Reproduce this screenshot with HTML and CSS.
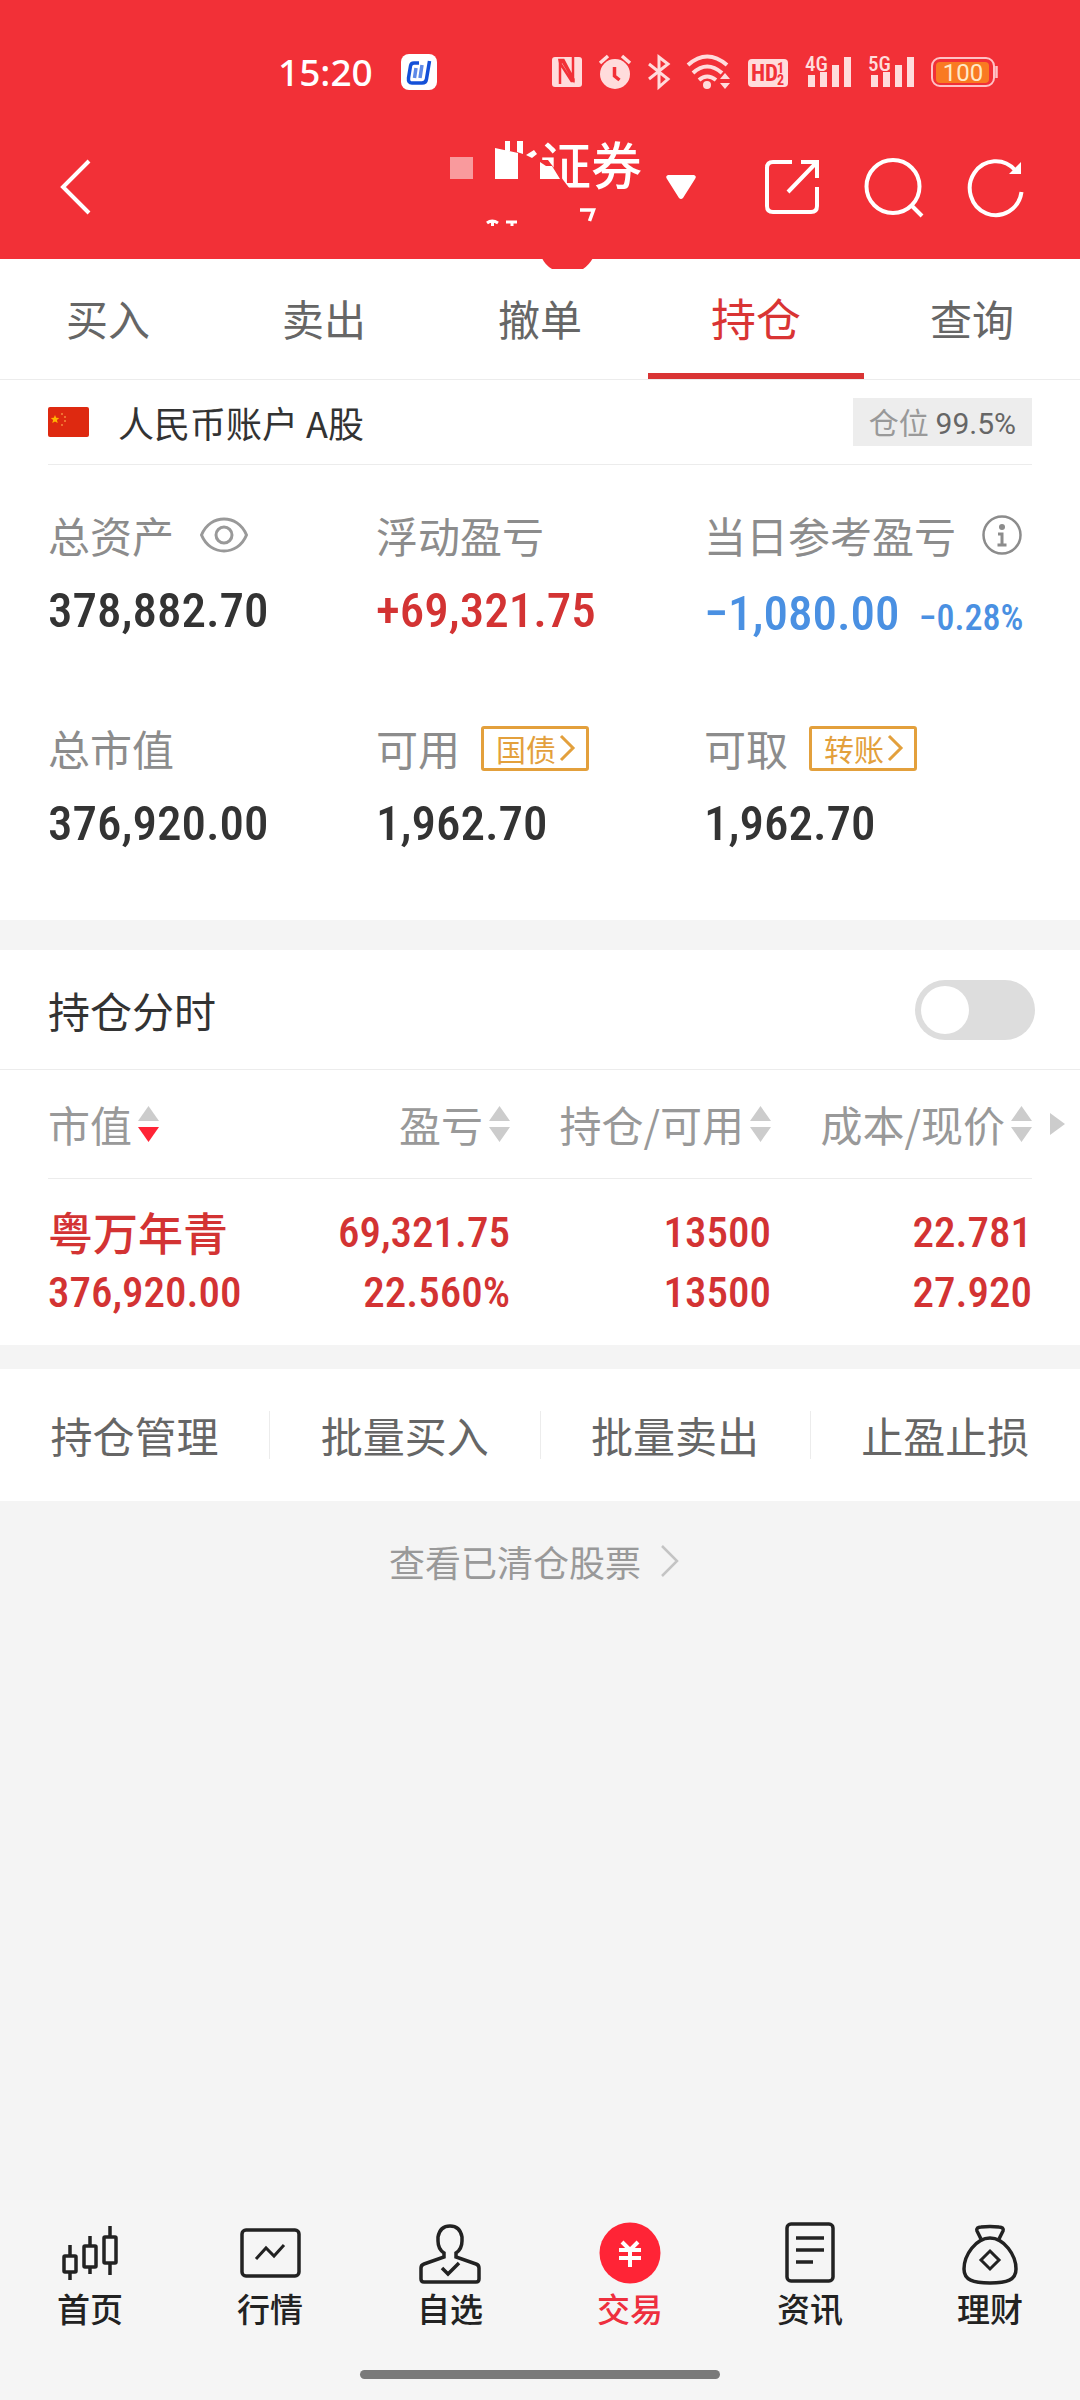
FILE: index.html
```html
<!DOCTYPE html>
<html lang="zh-CN">
<head>
<meta charset="utf-8">
<meta name="viewport" content="width=device-width, initial-scale=1">
<title>证券交易 - 持仓</title>
<link rel="stylesheet" href="styles.css">
</head>
<body>
<header class="header">
  <div class="status">
    <div class="status-left">
      <time class="clock">15:20</time>
      <svg class="app-badge" width="36" height="36" viewBox="0 0 36 36" aria-hidden="true">
        <rect width="36" height="36" rx="8" fill="#fff"/>
        <path d="M18 9h-5q-3 0-3.500 3l-2 12q-.5 5 3.500 5h10q4 0 4.500-4l3-18" fill="none" stroke="#1450d8" stroke-width="3.500"/>
        <path d="M15 14l-1.500 10M21 11l-2 13" stroke="#5f8ae8" stroke-width="3.500"/>
      </svg>
    </div>
    <div class="status-right">
      <svg width="30" height="36" viewBox="0 0 30 36" aria-hidden="true">
        <rect y="3" width="30" height="30" rx="3" fill="#ffdcdc"/>
        <path d="M8 30V8h3l10 17V3M7.500 6h4l10 19v2h-2L8 9z" fill="none" stroke="#f23037" stroke-width="2.500"/>
      </svg>
      <svg width="32" height="36" viewBox="0 0 32 36" aria-hidden="true">
        <circle cx="16" cy="20" r="15" fill="#ffdcdc"/>
        <path d="M1 9l8-7M31 9l-8-7" stroke="#ffdcdc" stroke-width="3.500"/>
        <path d="M15.500 13v9l5 4" fill="none" stroke="#f23037" stroke-width="3.500"/>
      </svg>
      <svg width="22" height="36" viewBox="0 0 22 36" aria-hidden="true">
        <path d="M1 10l19 15-9 8V3l9 7L1 25" fill="none" stroke="#ffdcdc" stroke-width="3"/>
      </svg>
      <svg width="44" height="36" viewBox="0 0 44 36" aria-hidden="true">
        <g fill="none" stroke="#ffdcdc" stroke-width="4"><path d="M1 11q19-17 39 0"/><path d="M6 19q14-13 29 0"/><path d="M12 26q8-7 17 0"/></g>
        <circle cx="20" cy="31" r="4" fill="#ffdcdc"/>
        <path d="M33 25l5-6 5 6zM33 29l5 6 5-6z" fill="#ffdcdc"/>
      </svg>
      <svg width="40" height="36" viewBox="0 0 40 36" aria-hidden="true">
        <rect y="5" width="40" height="28" rx="4" fill="#ffdcdc"/>
        <text class="glyph-bold" x="3" y="27" font-size="23">HD</text>
        <text class="glyph-bold" x="29" y="19" font-size="14">1</text>
        <text class="glyph-bold" x="29" y="31" font-size="14">2</text>
      </svg>
      <svg width="46" height="36" viewBox="0 0 46 36" aria-hidden="true">
        <text class="glyph-net" x="0" y="17" font-size="21">4G</text>
        <path d="M3 21h7v12H3zM15 18h7v15h-7zM27 11h7v22h-7zM39 3h7v30h-7z" fill="#ffdcdc"/>
      </svg>
      <svg width="46" height="36" viewBox="0 0 46 36" aria-hidden="true">
        <text class="glyph-net" x="0" y="17" font-size="21">5G</text>
        <path d="M3 21h7v12H3zM15 18h7v15h-7zM27 11h7v22h-7zM39 3h7v30h-7z" fill="#ffdcdc"/>
      </svg>
      <svg width="67" height="36" viewBox="0 0 67 36" aria-hidden="true">
        <rect x="1" y="4" width="62" height="28" rx="8" fill="none" stroke="#ffc2c6" stroke-width="2"/>
        <rect x="5" y="8" width="53" height="21" rx="4" fill="#f97a22"/>
        <path d="M65.500 12v12" stroke="#ffc2c6" stroke-width="2.500"/>
        <text class="glyph-batt" x="32" y="27" font-size="24" text-anchor="middle">100</text>
      </svg>
    </div>
  </div>
  <div class="appbar">
    <button class="icon-btn" aria-label="返回">
      <svg width="30" height="54" viewBox="0 0 30 54"><path d="M29 1L3 27l26 26" fill="none" stroke="#fff" stroke-width="4"/></svg>
    </button>
    <div class="account">
      <div class="account-name">
        <h1>证券</h1>
        <svg class="mask" width="192" height="160" viewBox="450 115 192 160" aria-hidden="true">
          <path d="M450 157h23v22h-23z" fill="#f99a9d"/>
          <path d="M495 148l23 5v26h-23zM505 141h5v10h-5zM517 141h6v13l-6-2zM526 155l8-5 3 4-5 4z" fill="#fff"/>
          <path d="M536 160h12l22 29h-34z" fill="#f23037"/>
          <path d="M540 162l6 4h6l8 13h-20z" fill="#fff"/>
          <path d="M487 223q5-4 11 0M492.500 222v4M506 222h11M512 222v4" fill="none" stroke="#fff" stroke-width="3"/>
          <path d="M580 210h13.500l-4 11" fill="none" stroke="#fff" stroke-width="3.500"/>
          <path d="M542 258h51q-4 7-10 11h-31q-7-4-10-11z" fill="#f23037"/>
        </svg>
      </div>
      <button class="icon-btn" aria-label="切换账户">
        <svg width="30" height="24" viewBox="0 0 30 24"><path d="M2 0h26q3 1 1 4L17 23q-2 2-4 0L1 4q-2-3 1-4z" fill="#fff"/></svg>
      </button>
    </div>
    <div class="tools">
      <button class="icon-btn" aria-label="分享">
        <svg width="54" height="54" viewBox="0 0 54 54" fill="none" stroke="#fff" stroke-width="4"><path d="M27 2H8q-6 0-6 6v38q0 6 6 6h38q6 0 6-6V27M36 2h16v16M51 3L23 32"/></svg>
      </button>
      <button class="icon-btn" aria-label="搜索">
        <svg width="59" height="59" viewBox="0 0 59 59" fill="none" stroke="#fff" stroke-width="4"><circle cx="29" cy="28.500" r="26.500"/><path d="M47 47l11 11"/></svg>
      </button>
      <button class="icon-btn" aria-label="刷新">
        <svg width="56" height="58" viewBox="0 0 56 58" fill="none" stroke="#fff" stroke-width="4"><path d="M47 12A26 27 0 1 0 53.500 34"/><path d="M53 4v12H41z" fill="#fff" stroke="none"/></svg>
      </button>
    </div>
  </div>
</header>

<nav class="tabs">
  <a href="#buy">买入</a>
  <a href="#sell">卖出</a>
  <a href="#cancel">撤单</a>
  <a href="#positions" class="active" aria-current="page">持仓</a>
  <a href="#query">查询</a>
</nav>

<main>
  <section class="panel">
    <div class="account-row">
      <svg width="41" height="30" viewBox="0 0 41 30" aria-hidden="true">
        <rect width="41" height="30" rx="2" fill="#de2910"/>
        <path d="M7 8l1.200 2.800 3 .2-2.300 2 .8 3L7 14.400 4.300 16l.8-3-2.300-2 3-.2z" fill="#ffb400"/>
        <g fill="#f58a3c"><circle cx="14" cy="7" r="1"/><circle cx="17" cy="10" r="1"/><circle cx="17" cy="14" r="1"/><circle cx="14" cy="18" r="1"/></g>
      </svg>
      <h2>人民币账户 A股</h2>
      <p class="ratio">仓位 <span>99.5%</span></p>
    </div>
    <dl class="summary">
      <div>
        <dt>总资产
          <button class="icon-btn gap" aria-label="隐藏金额"><svg width="48" height="36" viewBox="0 0 48 36" fill="none" stroke="#999" stroke-width="3"><path d="M1.500 18C6 7 15 2 24 2s18 5 22.500 16C42 29 33 34 24 34S6 29 1.500 18z"/><circle cx="24" cy="18" r="8"/></svg></button>
        </dt>
        <dd>378,882.70</dd>
      </div>
      <div>
        <dt>浮动盈亏</dt>
        <dd class="up">+69,321.75</dd>
      </div>
      <div>
        <dt>当日参考盈亏
          <button class="icon-btn gap" aria-label="说明"><svg width="40" height="40" viewBox="0 0 40 40" fill="none" stroke="#8c8c8c" stroke-width="2.500"><circle cx="20" cy="20" r="18.500"/><circle cx="20" cy="12" r="3" fill="#8c8c8c" stroke="none"/><path d="M16 19h4v11M15.500 30h9" stroke-width="3"/></svg></button>
        </dt>
        <dd class="down">−1,080.00 <small>−0.28%</small></dd>
      </div>
      <div>
        <dt>总市值</dt>
        <dd>376,920.00</dd>
      </div>
      <div>
        <dt>可用 <a class="chip" href="#bond">国债<svg width="16" height="26" viewBox="0 0 16 26" aria-hidden="true"><path d="M1 1l12 12L1 25" fill="none" stroke="#e3a03c" stroke-width="3"/></svg></a></dt>
        <dd>1,962.70</dd>
      </div>
      <div>
        <dt>可取 <a class="chip" href="#transfer">转账<svg width="16" height="26" viewBox="0 0 16 26" aria-hidden="true"><path d="M1 1l12 12L1 25" fill="none" stroke="#e3a03c" stroke-width="3"/></svg></a></dt>
        <dd>1,962.70</dd>
      </div>
    </dl>
  </section>

  <section class="panel holdings">
    <div class="toggle-row">
      <label for="intraday">持仓分时</label>
      <input class="switch" type="checkbox" role="switch" id="intraday">
    </div>
    <div class="table-wrap">
      <table>
        <thead>
          <tr>
            <th class="first"><button class="sort">市值<svg width="21" height="36" viewBox="0 0 21 36" aria-hidden="true"><path d="M0 15L10.500 0 21 15z" fill="#ccc"/><path d="M0 21h21L10.500 36z" fill="#ff2436"/></svg></button></th>
            <th><button class="sort">盈亏<svg width="21" height="36" viewBox="0 0 21 36" aria-hidden="true"><path d="M0 15L10.500 0 21 15zM0 21h21L10.500 36z" fill="#ccc"/></svg></button></th>
            <th><button class="sort">持仓/可用<svg width="21" height="36" viewBox="0 0 21 36" aria-hidden="true"><path d="M0 15L10.500 0 21 15zM0 21h21L10.500 36z" fill="#ccc"/></svg></button></th>
            <th><button class="sort">成本/现价<svg width="21" height="36" viewBox="0 0 21 36" aria-hidden="true"><path d="M0 15L10.500 0 21 15zM0 21h21L10.500 36z" fill="#ccc"/></svg></button></th>
          </tr>
        </thead>
        <tbody>
          <tr>
            <td class="first"><span class="stock">粤万年青</span><span>376,920.00</span></td>
            <td><span>69,321.75</span><span>22.560%</span></td>
            <td><span>13500</span><span>13500</span></td>
            <td><span>22.781</span><span>27.920</span></td>
          </tr>
        </tbody>
      </table>
      <svg class="more-cols" width="15" height="22" viewBox="0 0 15 22" aria-hidden="true"><path d="M0 0l15 11L0 22z" fill="#ccc"/></svg>
    </div>
  </section>

  <nav class="panel actions">
    <a href="#manage">持仓管理</a>
    <a href="#batch-buy">批量买入</a>
    <a href="#batch-sell">批量卖出</a>
    <a href="#stop">止盈止损</a>
  </nav>

  <a class="cleared" href="#cleared">查看已清仓股票
    <svg width="18" height="32" viewBox="0 0 18 32" aria-hidden="true"><path d="M1 1l15 15L1 31" fill="none" stroke="#c4c4c4" stroke-width="2.500"/></svg>
  </a>
</main>

<footer class="bottom">
  <nav class="bottom-nav">
    <a href="#home">
      <svg width="66" height="66" viewBox="0 0 66 66" fill="none" stroke="#222" stroke-width="3.500"><rect x="7" y="36" width="12" height="16" rx="1"/><rect x="27" y="26" width="12" height="21" rx="1"/><rect x="47" y="17" width="12" height="26" rx="1"/><path d="M13 25v10M13 53v7M33 16v9M33 48v6M53 6v10M53 44v11"/></svg>
      首页</a>
    <a href="#market">
      <svg width="66" height="66" viewBox="0 0 66 66" fill="none" stroke="#222" stroke-width="3.500"><rect x="5" y="10" width="57" height="46" rx="4"/><path d="M19 39l10-11 8 8 10-11" stroke-width="3"/></svg>
      行情</a>
    <a href="#watch">
      <svg width="66" height="66" viewBox="0 0 66 66" fill="none" stroke="#222" stroke-width="3.500"><path d="M27 37v-4q-6-4-6-12v-4q2-11 12-11t12 11v4q0 8-6 12v4l20 7q3 1 3 4v11q0 3-3 3H7q-3 0-3-3V48q0-3 3-4z"/><path d="M25 48l6 6 11-11"/></svg>
      自选</a>
    <a href="#trade" class="active" aria-current="page">
      <svg width="66" height="66" viewBox="0 0 66 66" fill="none" stroke="#fff" stroke-width="4"><circle cx="33" cy="33" r="30.500" fill="#ff2436" stroke="none"/><path d="M25 22l8 8 8-8M22 30h22M22 38h22M33 30v17"/></svg>
      交易</a>
    <a href="#news">
      <svg width="66" height="66" viewBox="0 0 66 66" fill="none" stroke="#222" stroke-width="3.500"><rect x="10" y="4" width="46" height="57" rx="4"/><path d="M19 18h28M19 30h28M19 42h17"/></svg>
      资讯</a>
    <a href="#wealth">
      <svg width="66" height="66" viewBox="0 0 66 66" fill="none" stroke="#222" stroke-width="3.500"><path d="M33 18c-14 0-26 17-26 31 0 11 9 14 26 14s26-3 26-14c0-14-12-31-26-31z"/><path d="M24 19l-4-8q-1-4 4-4 9-1 18 0 5 0 4 4l-4 8"/><path d="M33 31l9 9-9 9-9-9z" stroke-width="3"/></svg>
      理财</a>
  </nav>
  <div class="home-bar"></div>
</footer>
</body>
</html>
```
FILE: styles.css
```css
* {
  box-sizing: border-box;
}

body {
  margin: 0;
  min-height: 100vh;
  display: flex;
  flex-direction: column;
  background: #f4f4f4;
  color: #333;
  font-family: "Noto Sans CJK SC", sans-serif;
  font-size: 42px;
  line-height: 60px;
}

h1, h2, p, dl, dd {
  margin: 0;
  font-weight: 400;
}

a {
  color: inherit;
  text-decoration: none;
}

button {
  padding: 0;
  border: 0;
  background: none;
  color: inherit;
  font: inherit;
}

svg {
  display: block;
  flex: none;
  overflow: visible;
}

.icon-btn {
  display: flex;
}

/* Header */
.header {
  position: relative;
  z-index: 1;
  background: #f23037;
  color: #fff;
}

.status {
  display: flex;
  justify-content: space-between;
  padding: 54px 82px 25px 278px;
}

.status-left {
  display: flex;
  align-items: center;
  gap: 28px;
}

.clock {
  font: 500 37px/36px "Noto Sans", sans-serif;
}

.status-right {
  display: flex;
  gap: 17px;
}

.glyph-bold {
  font-family: "Roboto Condensed", Roboto, sans-serif;
  font-weight: 700;
  fill: #f23037;
}

.glyph-net {
  font-family: "Roboto Condensed", Roboto, sans-serif;
  font-weight: 500;
  fill: #ffdcdc;
}

.glyph-batt {
  font-family: Roboto, sans-serif;
  fill: #ffe9c8;
}

.appbar {
  display: flex;
  align-items: center;
  height: 144px;
  padding: 0 56px 0 60px;
}

.account {
  display: flex;
  align-items: center;
  gap: 24px;
  margin: 0 69px 0 auto;
}

.account-name {
  position: relative;
  height: 144px;
  padding: 18px 0 0 90px;
}

.account-name h1 {
  font-size: 51px;
  font-weight: 500;
}

.mask {
  position: absolute;
  top: 0;
  left: 0;
}

.tools {
  display: flex;
  align-items: center;
  gap: 45px;
}

/* Trade tabs */
.tabs {
  display: flex;
  border-bottom: 1px solid #ececec;
  background: #fff;
  color: #666;
}

.tabs a {
  flex: 1;
  padding: 29px 0 25px;
  border-bottom: 6px solid transparent;
  text-align: center;
}

.tabs .active {
  border-color: #d93434;
  color: #d93434;
  font-size: 45px;
}

/* Account summary */
.panel {
  background: #fff;
}

.account-row {
  display: flex;
  align-items: center;
  height: 85px;
  margin: 0 48px;
  border-bottom: 1px solid #ececec;
}

.account-row h2 {
  margin-left: 29px;
  font-size: 36px;
}

.ratio {
  height: 48px;
  margin-left: auto;
  padding: 0 16px;
  background: #ededed;
  color: #999;
  font-size: 30px;
  line-height: 46px;
}

.ratio span {
  color: #666;
  font-family: Roboto, sans-serif;
}

.summary {
  display: grid;
  grid-template-columns: repeat(3, 1fr);
  row-gap: 77px;
  padding: 40px 48px 66px;
}

.summary dt {
  display: flex;
  align-items: center;
  height: 60px;
  color: #8c8c8c;
  white-space: nowrap;
}

.summary dd {
  height: 60px;
  margin-top: 16px;
  font: 500 49px/60px "Roboto Condensed", Roboto, sans-serif;
  white-space: nowrap;
}

.summary small {
  margin-left: 8px;
  font-size: 36px;
}

.gap {
  margin-left: 26px;
}

.up {
  color: #d33333;
}

.summary .down {
  color: #4a90e2;
  line-height: 66px;
}

.chip {
  display: flex;
  align-items: center;
  gap: 4px;
  height: 45px;
  margin-left: 21px;
  padding: 0 10px 0 12px;
  border: 3px solid #e3a03c;
  border-radius: 3px;
  color: #e3a03c;
  font-size: 30px;
  line-height: 36px;
}

/* Holdings */
.holdings {
  margin-top: 30px;
}

.toggle-row {
  display: flex;
  align-items: center;
  justify-content: space-between;
  height: 120px;
  padding: 0 45px 0 48px;
  border-bottom: 1px solid #ececec;
}

.switch {
  appearance: none;
  width: 120px;
  height: 60px;
  margin: 0;
  padding: 6px;
  border-radius: 30px;
  background: #ddd;
}

.switch::before {
  content: "";
  display: block;
  width: 48px;
  height: 48px;
  border-radius: 50%;
  background: #fff;
}

.table-wrap {
  position: relative;
  padding: 0 48px 23px;
}

table {
  width: 100%;
  border-collapse: collapse;
  table-layout: fixed;
}

th {
  height: 108px;
  padding: 0;
  border-bottom: 1px solid #ececec;
  color: #999;
  font-weight: 400;
}

.sort {
  display: flex;
  align-items: center;
  justify-content: flex-end;
  gap: 6px;
  width: 100%;
  white-space: nowrap;
}

th.first {
  width: 201px;
}

.first .sort {
  justify-content: flex-start;
}

td {
  padding: 23px 0 0;
  color: #d33333;
  font: 500 43px/60px "Roboto Condensed", Roboto, sans-serif;
  text-align: right;
}

td.first {
  text-align: left;
}

td span {
  display: block;
  height: 60px;
}

.stock {
  font-family: "Noto Sans CJK SC", sans-serif;
  font-size: 45px;
}

.more-cols {
  position: absolute;
  top: 43px;
  right: 15px;
}

/* Batch actions */
.actions {
  display: flex;
  margin-top: 24px;
  padding: 42px 0;
  color: #666;
}

.actions a {
  flex: 1;
  border-right: 1px solid #ececec;
  line-height: 48px;
  text-align: center;
}

.actions a:last-child {
  border-right: 0;
}

.cleared {
  display: flex;
  align-items: center;
  justify-content: center;
  gap: 20px;
  padding: 30px 12px 30px 0;
  color: #999;
  font-size: 36px;
}

/* Bottom navigation */
.bottom {
  margin-top: auto;
  padding: 20px 0 21px;
  background: #f5f5f5;
}

.bottom-nav {
  display: flex;
  color: #222;
  font-size: 33px;
  font-weight: 500;
  line-height: 45px;
}

.bottom-nav a {
  flex: 1;
  display: flex;
  flex-direction: column;
  align-items: center;
}

.bottom-nav .active {
  color: #ee2f3e;
}

.home-bar {
  width: 33.333%;
  height: 9px;
  margin: 39px auto 0;
  border-radius: 5px;
  background: #7a7a7a;
}
```
